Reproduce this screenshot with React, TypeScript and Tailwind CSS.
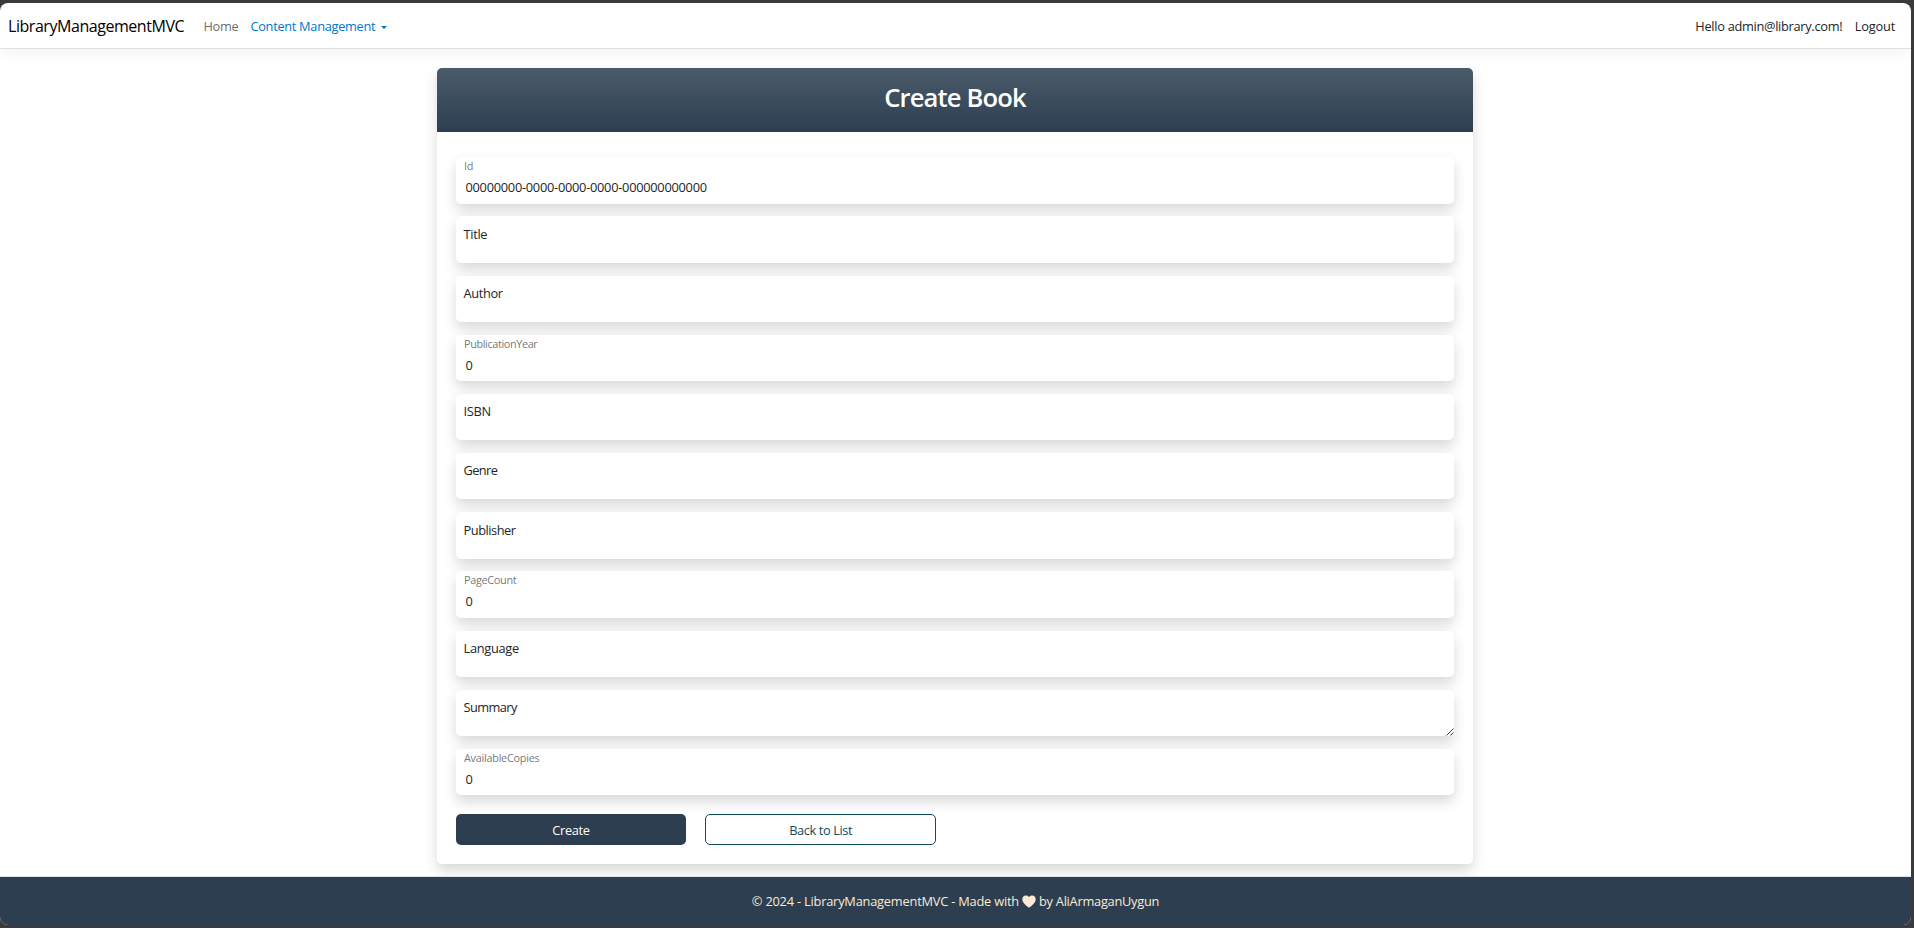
type Field = { label: string; tracking: string; value?: string; area?: boolean };

const fields: Field[] = [
  { label: "Id", tracking: "tracking-[-0.3px]", value: "00000000-0000-0000-0000-000000000000" },
  { label: "Title", tracking: "tracking-[-0.3px]" },
  { label: "Author", tracking: "tracking-[-0.36px]" },
  { label: "PublicationYear", tracking: "tracking-[-0.38px]", value: "0" },
  { label: "ISBN", tracking: "tracking-[-0.3px]" },
  { label: "Genre", tracking: "tracking-[-0.6px]" },
  { label: "Publisher", tracking: "tracking-[-0.46px]" },
  { label: "PageCount", tracking: "tracking-[-0.32px]", value: "0" },
  { label: "Language", tracking: "tracking-[-0.28px]" },
  { label: "Summary", tracking: "tracking-[-0.58px]", area: true },
  { label: "AvailableCopies", tracking: "tracking-[-0.27px]", value: "0" },
];

function FormField({ label, tracking, value, area }: Field) {
  return (
    <div className="relative h-[46.4px] rounded-[5px] bg-white pl-[7.5px] shadow-[0_6.4px_12.8px_rgba(0,0,0,0.15)]">
      {value ? (
        <>
          <label className={`block h-[21px] pl-[0.5px] text-[10.88px] leading-[17px] text-[#212529]/65 ${tracking}`}>{label}</label>
          <input
            defaultValue={value}
            className="block h-[19px] w-full bg-transparent pl-[2px] leading-[19px] tracking-[-0.26px] outline-none"
          />
        </>
      ) : (
        <label className={`block pt-[8.3px] leading-[19px] ${tracking}`}>{label}</label>
      )}
      {area && (
        <svg className="absolute right-[0.5px] bottom-[0.5px] size-[8px]" viewBox="0 0 8 8" stroke="#444" strokeWidth="1" fill="none">
          <path d="M0.5 7.5L7.5 0.5M4.5 7.5L7.5 4.5" />
        </svg>
      )}
    </div>
  );
}

export default function App() {
  return (
    <div className="h-[928px] w-full overflow-hidden bg-[#3a3a3a] pt-[3px] pr-[3px] font-['Open_Sans','Noto_Sans',sans-serif] text-[12.8px] text-[#212529]">
      <div className="flex h-[922px] flex-col overflow-hidden rounded-[8px] bg-white">
        <nav className="flex h-[46px] shrink-0 items-center border-b border-[#dee2e6] pr-[16px] pl-[8px] shadow-[0_4px_12px_rgba(0,0,0,0.05)]">
          <a className="text-[16px] tracking-[-0.45px] text-black">LibraryManagementMVC</a>
          <a className="mt-[2px] ml-[19.3px] tracking-[-0.3px] text-[#212529]/70">Home</a>
          <a className="mt-[2px] ml-[12px] flex items-center tracking-[-0.3px] text-[#0077cc]">
            Content Management
            <span className="mt-[1px] ml-[5.5px] border-x-[3px] border-t-[3px] border-x-transparent border-t-[#0077cc]" />
          </a>
          <span className="mt-[2px] ml-auto tracking-[-0.3px]">Hello admin@library.com!</span>
          <a className="mt-[2px] ml-[12.5px] tracking-[-0.2px]">Logout</a>
        </nav>

        <main className="flex-1 pt-[19px] pr-px">
          <section className="mx-auto h-[796px] w-[1036px] rounded-[5px] bg-white shadow-[0_6.4px_12.8px_rgba(0,0,0,0.15)]">
            <header className="h-[64px] rounded-t-[5px] bg-linear-to-b from-[#4b5b6b] to-[#2c3e50] pt-[10px] text-center">
              <h1 className="text-[25.6px] leading-[40px] font-semibold tracking-[-0.86px] text-white">Create Book</h1>
            </header>
            <form className="px-[19px] pt-[25.3px]">
              <div className="flex flex-col gap-[12.77px]">
                {fields.map((f) => (
                  <FormField key={f.label} {...f} />
                ))}
              </div>
              <div className="mt-[19.2px] flex gap-[19.2px]">
                <button
                  type="button"
                  className="h-[30.4px] w-[230px] rounded-[5px] bg-[#2d3e50] pt-px tracking-[-0.3px] text-white"
                >
                  Create
                </button>
                <button
                  type="button"
                  className="h-[30.4px] w-[231px] rounded-[5px] border border-[#0f4c5c] bg-white pt-px tracking-[-0.4px] text-[#0f4c5c]"
                >
                  Back to List
                </button>
              </div>
            </form>
          </section>
        </main>

        <footer className="relative flex h-[49px] shrink-0 items-center justify-center border-t border-[#dee2e6] bg-[#2d3e50] pt-[2px] text-[#faebd7]">
          <span className="tracking-[-0.2px]">© 2024 - LibraryManagementMVC - Made with</span>
          <svg className="mx-[3px] -mt-px h-[13px] w-[14px]" viewBox="0 0 14 13" fill="#faebd7">
            <path d="M7 12.6C5.3 11.5 0.3 8 0.3 4.2C0.3 1.9 1.9 0.4 3.8 0.4C5.2 0.4 6.4 1 7 2C7.6 1 8.8 0.4 10.2 0.4C12.1 0.4 13.7 1.9 13.7 4.2C13.7 8 8.7 11.5 7 12.6Z" />
          </svg>
          <span className="tracking-[-0.25px]">by AliArmaganUygun</span>
        </footer>
      </div>
    </div>
  );
}
